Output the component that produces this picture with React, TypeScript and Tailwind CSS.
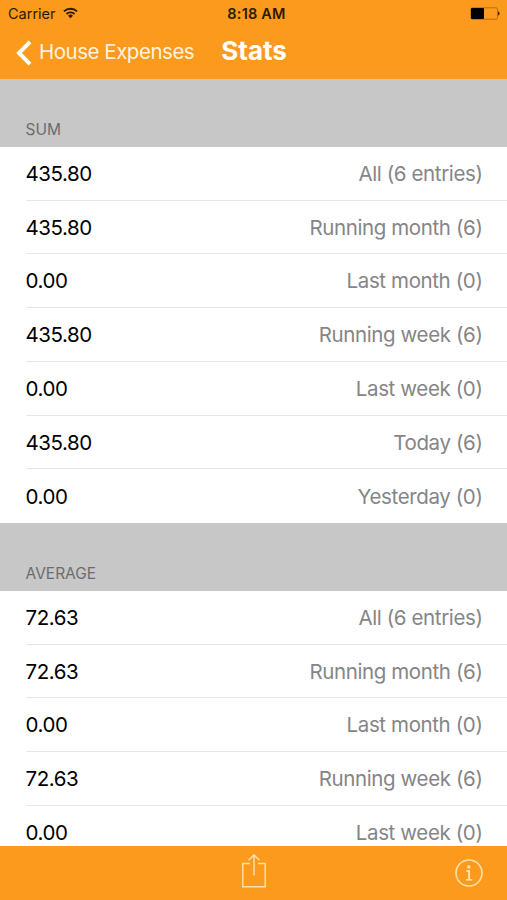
import React from 'react';

interface StatRow {
  value: string;
  label: string;
}

interface StatSectionProps {
  title: string;
  rows: StatRow[];
}

const sumRows: StatRow[] = [
  { value: '435.80', label: 'All (6 entries)' },
  { value: '435.80', label: 'Running month (6)' },
  { value: '0.00', label: 'Last month (0)' },
  { value: '435.80', label: 'Running week (6)' },
  { value: '0.00', label: 'Last week (0)' },
  { value: '435.80', label: 'Today (6)' },
  { value: '0.00', label: 'Yesterday (0)' },
];

const averageRows: StatRow[] = [
  { value: '72.63', label: 'All (6 entries)' },
  { value: '72.63', label: 'Running month (6)' },
  { value: '0.00', label: 'Last month (0)' },
  { value: '72.63', label: 'Running week (6)' },
  { value: '0.00', label: 'Last week (0)' },
];

const StatSection: React.FC<StatSectionProps> = ({ title, rows }) => (
  <section>
    <h2 className="h-[68px] bg-[#c7c7c7] pl-[25.5px] pt-[40px] text-[15.5px] leading-[22px] text-[#6d6d6d]">
      {title}
    </h2>
    <ul className="pl-[26px]">
      {rows.map((row, i) => (
        <li
          key={row.label}
          className={`flex h-[53.72px] items-center justify-between pt-[2px] pr-[24.5px] text-[20.5px] ${
            i < rows.length - 1 ? 'border-b border-[#e6e6e6]' : ''
          }`}
        >
          <span className="-ml-[0.5px] tracking-[-0.45px] text-black">{row.value}</span>
          <span className="tracking-[-0.38px] text-[#858588]">{row.label}</span>
        </li>
      ))}
    </ul>
  </section>
);

const App: React.FC = () => {
  return (
    <div className="flex h-[900px] w-[507px] flex-col overflow-hidden bg-white font-['Inter',sans-serif]">
      {/* Header */}
      <header className="h-[79px] shrink-0 bg-[#fb9a1c]">
        <div className="grid h-[27px] grid-cols-3 items-center pl-[8px] pr-[7px] text-[14.5px] text-[#2b1a03]">
          <div className="flex items-center gap-[7px]">
            <span>Carrier</span>
            <svg className="mb-[2px] h-[12px] w-[15px]" viewBox="0 0 16 12" fill="none" stroke="currentColor" strokeWidth="2">
              <path d="M1 4.3a10 10 0 0 1 14 0M3.7 7.1a6.2 6.2 0 0 1 8.6 0" />
              <path d="M8 11.5 5.4 8.9a3.7 3.7 0 0 1 5.2 0z" fill="currentColor" stroke="none" />
            </svg>
          </div>
          <span className="pl-[5px] text-center font-semibold tracking-[0.2px]">8:18 AM</span>
          <svg className="h-[13px] w-[30px] justify-self-end" viewBox="0 0 30 13" fill="none">
            <rect x="0.9" y="0.8" width="26.6" height="11.4" rx="1.5" stroke="#a8640f" strokeWidth="0.8" />
            <rect x="1" y="1" width="13" height="11" rx="0.8" fill="#000" />
            <path d="M28 4.5c2 .6 2 3.4 0 4z" fill="#3a2200" />
          </svg>
        </div>
        <div className="flex h-[51px] items-center pl-[15px] text-white">
          <svg className="h-[26px] w-[17px]" viewBox="0 0 17 26" fill="none" stroke="currentColor" strokeWidth="4">
            <path d="M15 1.8 4 13 15 24.2" />
          </svg>
          <span className="ml-[7px] text-[20.5px] tracking-[-0.48px] text-[#fff3df]">House Expenses</span>
          <h1 className="ml-[27px] pb-[4px] text-[26px] font-bold">Stats</h1>
        </div>
      </header>

      {/* Stats list */}
      <main className="min-h-0 flex-1 overflow-hidden">
        <StatSection title="SUM" rows={sumRows} />
        <StatSection title="AVERAGE" rows={averageRows} />
      </main>

      {/* Toolbar */}
      <footer className="grid h-[54px] shrink-0 grid-cols-3 items-start bg-[#fb9a1c] px-[24px] pt-[8px] text-[#ffe0a8]">
        <span />
        <svg className="ml-[1px] h-[35px] w-[26px] justify-self-center" viewBox="0 0 26 35" fill="none" stroke="currentColor" strokeWidth="1.5">
          <path d="M9 9.5H1.8v23.2h22.4V9.5H17M13 21.5V1.5M7.5 6.3 13 .9l5.5 5.4" />
        </svg>
        <svg className="mt-[5px] h-[28px] w-[28px] justify-self-end" viewBox="0 0 28 28" fill="none" stroke="currentColor" strokeWidth="1.6">
          <circle cx="14" cy="14" r="13" />
          <circle cx="13.8" cy="8" r="1.8" fill="currentColor" stroke="none" />
          <path d="M11.3 12h2.8v8.5" strokeWidth="2" />
          <path d="M11 20.8h6.2" />
        </svg>
      </footer>
    </div>
  );
};

export default App;
